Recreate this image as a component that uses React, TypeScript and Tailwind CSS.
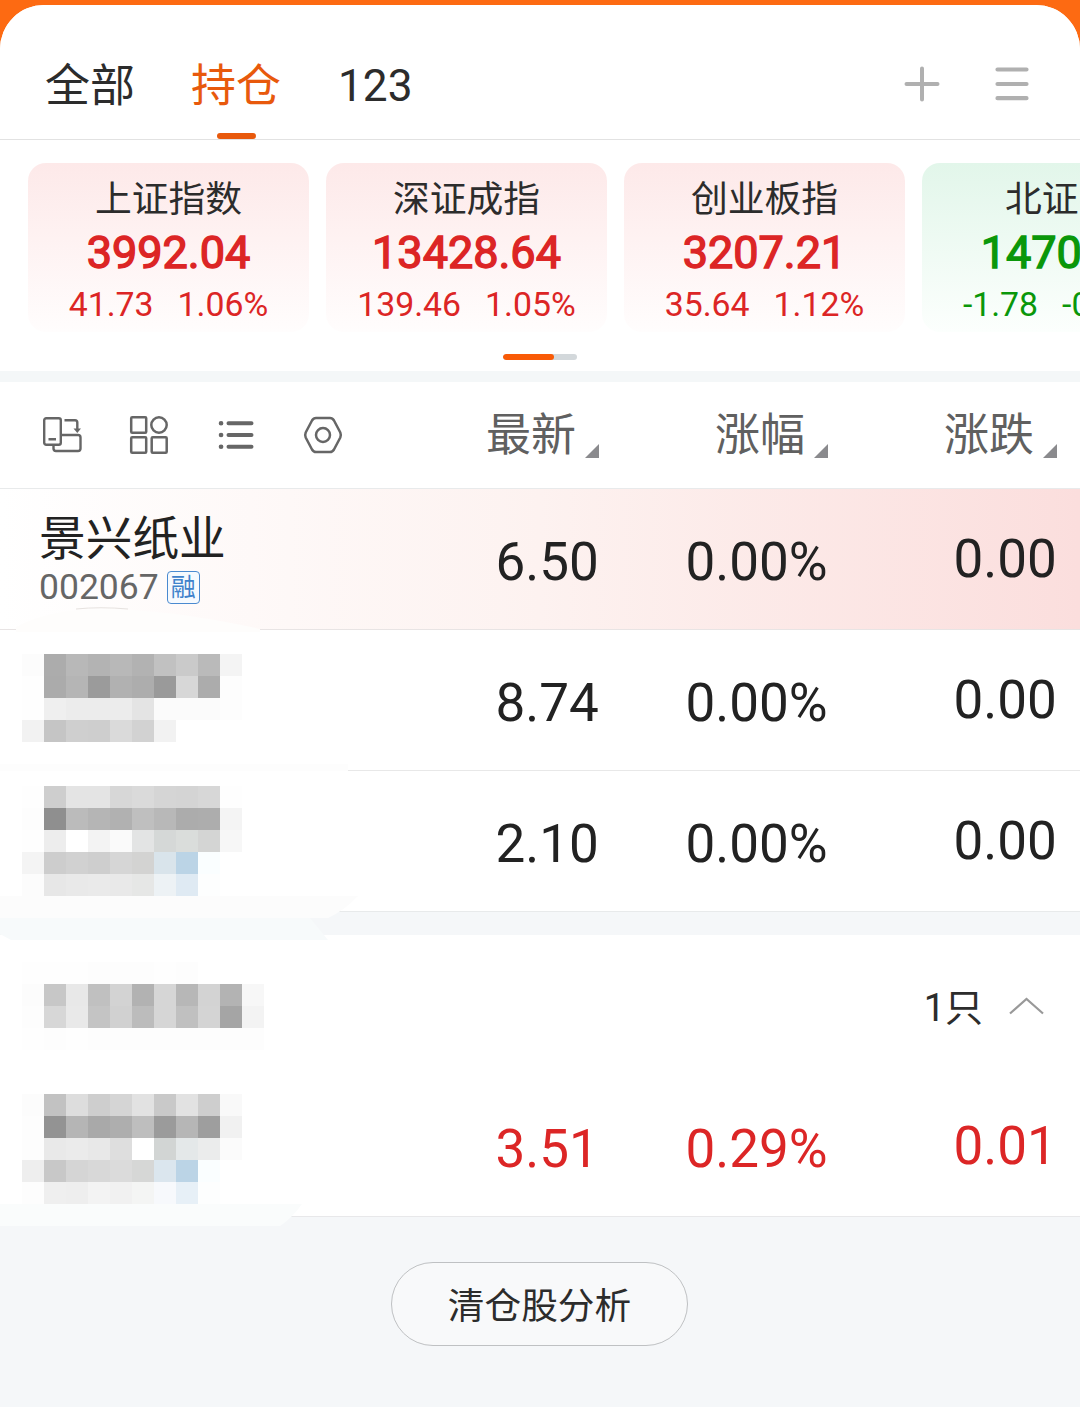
import React from 'react';

const INDEXES = [
  { name: '上证指数', price: '3992.04', change: '41.73', percent: '1.06%', up: true },
  { name: '深证成指', price: '13428.64', change: '139.46', percent: '1.05%', up: true },
  { name: '创业板指', price: '3207.21', change: '35.64', percent: '1.12%', up: true },
  { name: '北证50', price: '1470.35', change: '-1.78', percent: '-0.12%', up: false },
];

const COLUMNS = ['最新', '涨幅', '涨跌'];

// Masked names, one colour per 22px tile
const MASK_A = [
  ['#fcfcfc', '#acacac', '#b8b8b8', '#b3b3b3', '#b8b8b8', '#b2b2b2', '#c1c1c1', '#cacaca', '#bababa', '#f4f4f4'],
  ['#fefefe', '#ababab', '#b5b5b5', '#9b9b9b', '#b1b1b1', '#adadad', '#9a9a9a', '#d7d7d7', '#acacac', '#fdfdfd'],
  ['#fefefe', '#efefef', '#ececec', '#ececec', '#ececec', '#e4e4e4', '#fbfbfb', '#fbfbfb', '#fbfbfb', '#fdfdfd'],
  ['#f2f2f2', '#c5c5c5', '#cfcfcf', '#cecece', '#dadada', '#d2d2d2', '#f2f2f2'],
];

const MASK_B = [
  ['#fefefe', '#cecece', '#e4e4e4', '#e4e4e4', '#d7d7d7', '#dadada', '#d5d5d5', '#d4d4d4', '#d7d7d7', '#fefefe'],
  ['#fdfdfd', '#8f8f8f', '#bbbbbb', '#b5b5b5', '#b1b1b1', '#bfbfbf', '#b8b8b8', '#acacac', '#adadad', '#f4f4f4'],
  ['#fefefe', '#ededed', '#ffffff', '#f3f3f3', '#fafafa', '#e3e4e4', '#d5d8d7', '#dadddb', '#d4d5d4', '#f7f7f7'],
  ['#f4f4f4', '#cdcdcd', '#d1d1d1', '#cecece', '#d6d6d6', '#d3d3d2', '#d9e4eb', '#bbd4e6', '#fafeff'],
  ['#fcfcfc', '#e7e7e7', '#e9e9e9', '#eaeaea', '#e9e9e9', '#e6e7e6', '#edf2f5', '#dfeaf3', '#fdfefe'],
];

const MASK_TITLE = [
  ['#fefefe', '#fefefe', '#fefefe', '#fdfdfd', '#fdfdfd', '#fdfdfd', '#fefefe', '#fdfdfd'],
  ['#fcfcfc', '#c7c7c7', '#e8e8e8', '#c0c0c0', '#d3d3d3', '#b2b2b2', '#d6d6d6', '#b7b7b7', '#d3d3d3', '#b3b3b3', '#f7f7f7'],
  ['#fdfdfd', '#d7d7d7', '#e9e9e9', '#c4c4c4', '#d1d1d1', '#bcbcbc', '#d6d6d6', '#c0c0c0', '#d4d4d4', '#a5a5a5', '#f3f3f3'],
  ['#fefefe', '#fdfdfd', '#fefefe', '#fdfdfd', '#fdfdfd', '#fdfdfd', '#fdfdfd', '#fdfdfd', '#fdfdfd', '#fdfdfd', '#fdfdfd'],
];

const MASK_C = [
  ['#fcfcfc', '#c2c2c2', '#dddddd', '#cecece', '#d5d5d5', '#e2e2e2', '#c9c9c9', '#e2e2e2', '#cecece', '#f9f9f9'],
  ['#fdfdfd', '#939393', '#b5b5b5', '#a9a9a9', '#aeaeae', '#bebebe', '#9b9b9b', '#b6b6b6', '#9e9e9e', '#f1f1f1'],
  ['#fdfdfd', '#e9e9e9', '#ebebeb', '#e8e8e8', '#dedede', '#ffffff', '#d2d5d4', '#e4e8e9', '#ebecec', '#fbfbfb'],
  ['#eeeeee', '#c8c8c8', '#d5d5d5', '#d8d8d8', '#dbdbdb', '#d6d7d6', '#dbe6ee', '#bbd4e6', '#fafeff'],
  ['#fdfdfd', '#efefef', '#eeeeee', '#f3f3f3', '#f1f1f1', '#f4f5f4', '#f7f9fc', '#e7f0f7', '#fdfefe'],
];

const Mosaic = ({ tiles }: { tiles: string[][] }) => (
  <div className="w-[320px] shrink-0 pl-[22px]">
    {tiles.map((row, y) => (
      <div key={y} className="flex h-[22px]">
        {row.map((color, x) => (
          <div key={x} className="size-[22px]" style={{ backgroundColor: color }} />
        ))}
      </div>
    ))}
  </div>
);

const IndexCard = ({ item }: { item: (typeof INDEXES)[number] }) => (
  <div
    className={`h-[169px] w-[281px] shrink-0 rounded-[18px] bg-gradient-to-b pt-[15px] text-center whitespace-nowrap ${
      item.up ? 'from-[#fde9e9] to-[#fffdfd] text-[#dc2525]' : 'from-[#e2f6ea] to-[#fcfffd] text-[#0a970a]'
    }`}
  >
    <div className="text-[36.8px] leading-[44px] text-[#2c2c2c]">{item.name}</div>
    <div className="text-[45px] leading-[62px] [-webkit-text-stroke:1.4px_currentColor]">{item.price}</div>
    <div className="flex justify-center gap-[24px] text-[33.8px] leading-[41px]">
      <span>{item.change}</span>
      <span>{item.percent}</span>
    </div>
  </div>
);

const Values = ({ values, red }: { values: string[]; red?: boolean }) => (
  <div className={`ml-auto flex text-[53px] leading-[140px] ${red ? 'text-[#dc2626]' : 'text-[#222222]'}`}>
    <div className="w-[190px] pt-[3px]">{values[0]}</div>
    <div className="w-[268px] pt-[3px]">{values[1]}</div>
    <div className="w-[126.5px]">{values[2]}</div>
  </div>
);

const App = () => {
  return (
    <div className="h-[1407px] w-[1080px] overflow-hidden bg-[#fd6a12] pt-[5px] font-[Roboto,'Noto_Sans_CJK_SC',sans-serif]">
      <div className="h-[1402px] overflow-hidden rounded-t-[44px] bg-[#f5f7f9]">
        {/* Tabs */}
        <header className="flex h-[135px] items-center border-b border-[#e2e2e2] bg-white pt-[26px] pr-[51px] pl-[45px] text-[45px] text-[#2c2c2c]">
          <span className="pt-[4px] leading-[60px]">全部</span>
          <span className="relative ml-[56px] pt-[4px] leading-[60px] text-[#e8590c]">
            持仓
            <i className="absolute top-[80px] left-[26px] h-[6px] w-[39px] rounded-full bg-[#e8590c]" />
          </span>
          <span className="ml-[57px] pt-[2px] text-[44.2px] leading-[60px]">123</span>
          <svg className="mt-[-3px] ml-auto" width="36" height="36" viewBox="0 0 36 36" stroke="#b0b0b0" strokeWidth="4" strokeLinecap="round">
            <path d="M18 2.500V33.500M2.500 18H33.500" />
          </svg>
          <svg className="mt-[-3px] ml-[55px]" width="34" height="36" viewBox="0 0 34 36" stroke="#b0b0b0" strokeWidth="4.200" strokeLinecap="round">
            <path d="M2.500 3.500H31.500M2.500 18H31.500M2.500 32.200H31.500" />
          </svg>
        </header>

        {/* Index cards */}
        <section className="h-[231px] bg-white pt-[23px]">
          <div className="flex gap-[17px] overflow-hidden pl-[28px]">
            {INDEXES.map((item) => (
              <IndexCard key={item.name} item={item} />
            ))}
          </div>
          <div className="mx-auto mt-[22px] h-[6px] w-[74px] overflow-hidden rounded-full bg-[#d3d8db]">
            <div className="h-full w-[51px] rounded-full bg-[#f95a06]" />
          </div>
        </section>
        <div className="h-[11px] bg-[#f4f7f8]" />

        {/* Table header */}
        <div className="flex h-[107px] items-center border-b border-[#e8eaeb] bg-white pl-[42px]">
          <div className="flex gap-[46px]">
            <svg width="41" height="40" viewBox="0 0 41 40" fill="none" stroke="#666" strokeWidth="2.400" strokeLinejoin="round">
              <rect x="2.200" y="3.200" width="16.600" height="26.600" rx="2" />
              <path d="M6.500 24.300H14M11.500 30V33.500Q11.500 36 14 36H36Q38.500 36 38.500 33.500V22.500Q38.500 20 36 20H19M22.500 5.200H33Q35.300 5.200 35.300 7.500V15" />
              <path d="M31.500 13.500H39L35.300 18Z" fill="#666" stroke="none" />
            </svg>
            <svg width="41" height="40" viewBox="0 0 41 40" fill="none" stroke="#666" strokeWidth="2.500">
              <rect x="2.200" y="2.200" width="15" height="15.500" rx="1" />
              <circle cx="30" cy="10" r="7.700" />
              <rect x="2.200" y="22.300" width="15" height="15.500" rx="1" />
              <rect x="22.700" y="22.300" width="15" height="15.500" rx="1" />
            </svg>
            <svg width="41" height="40" viewBox="0 0 41 40" fill="none" stroke="#666" strokeWidth="4" strokeLinecap="round">
              <path d="M12.500 8.300H35.500M12.500 20H35.500M12.500 31.700H35.500" />
              <path d="M5 8.300H5.100M5 20H5.100M5 31.700H5.100" strokeWidth="4.600" />
            </svg>
            <svg width="41" height="40" viewBox="0 0 41 40" fill="none" stroke="#666" strokeWidth="2.500">
              <path d="M13 3H27Q29.500 3 31 5.500L37.300 17.500Q38.300 20 37.300 22.500L31 34.500Q29.500 37 27 37H13Q10.500 37 9 34.500L2.700 22.500Q1.700 20 2.700 17.500L9 5.500Q10.500 3 13 3Z" />
              <circle cx="20" cy="20" r="7" />
            </svg>
          </div>
          <div className="ml-auto flex text-[45px] leading-[60px] text-[#606060]">
            {COLUMNS.map((name) => (
              <div key={name} className="flex w-[229px] items-end pt-[2px] last:w-[136px]">
                <span>{name}</span>
                <svg className="mb-[8px] ml-[9px]" width="14" height="14" viewBox="0 0 14 14">
                  <path d="M14 0V14H0Z" fill="#8a8a8d" />
                </svg>
              </div>
            ))}
          </div>
        </div>

        {/* Holdings */}
        <div className="relative flex h-[141px] border-b border-[#e8e4e4] bg-gradient-to-r from-white via-[#fdf2f0] to-[#fbdedd]">
          <div className="pt-[21px] pl-[39px]">
            <div className="text-[46.700px] leading-[58px] text-[#222222]">景兴纸业</div>
            <div className="flex h-[38px] items-center text-[35.500px] leading-[38px] text-[#666666]">
              002067
              <span className="ml-[8px] flex h-[33px] w-[33px] items-center justify-center rounded-[4px] border border-[#4a8ad0] bg-[#f6fafe] pt-[1px] text-[25px] leading-none text-[#3f82cb]">
                融
              </span>
            </div>
          </div>
          <Values values={['6.50', '0.00%', '0.00']} />
          <svg className="absolute top-[118px] left-0 z-10" width="270" height="26" viewBox="0 0 270 26">
            <path d="M16 25V20Q50 2 100 2Q170 2 260 22V25Z" fill="#fefdfc" />
            <path d="M76 2Q100 -0.500 128 2" stroke="#e6e2df" fill="none" />
          </svg>
        </div>
        <div className="relative flex h-[141px] border-b border-[#e8e8e8] bg-white">
          <div className="pt-[24px]">
            <Mosaic tiles={MASK_A} />
          </div>
          <Values values={['8.74', '0.00%', '0.00']} />
          <svg className="absolute top-[134px] left-0" width="355" height="22" viewBox="0 0 355 22">
            <path d="M0 0H348V14L355 22H0Z" fill="#fdfdfd" />
          </svg>
        </div>
        <div className="relative flex h-[141px] border-b border-[#e8eaeb] bg-white">
          <div className="pt-[15px]">
            <Mosaic tiles={MASK_B} />
          </div>
          <Values values={['2.10', '0.00%', '0.00']} />
          <svg className="absolute top-[125px] left-0 z-10" width="360" height="44" viewBox="0 0 360 44">
            <path d="M0 0H358Q345 14 328 22H0Z" fill="#fcfcfc" />
            <path d="M0 22H310L328 44H11L0 38Z" fill="#f7fafb" />
          </svg>
        </div>
        <div className="h-[23px] bg-[#f5f7f9]" />

        {/* Collapsible group */}
        <div className="flex h-[141px] bg-white">
          <div className="pt-[27px]">
            <Mosaic tiles={MASK_TITLE} />
          </div>
          <div className="ml-auto flex items-center pr-[36px] text-[38px] text-[#2c2c2c]">
            <span className="pt-[6px]">1只</span>
            <svg className="ml-[26px]" width="35" height="18" viewBox="0 0 35 18" fill="none" stroke="#999" strokeWidth="2.200">
              <path d="M1 16.500L17.500 2L34 16.500" />
            </svg>
          </div>
        </div>
        <div className="relative flex h-[141px] border-b border-[#e8e8ea] bg-white">
          <div className="pt-[18px]">
            <Mosaic tiles={MASK_C} />
          </div>
          <Values values={['3.51', '0.29%', '0.01']} red />
          <svg className="absolute top-[128px] left-0 z-10" width="302" height="22" viewBox="0 0 302 22">
            <path d="M0 0H302Q292 14 280 22H0Z" fill="#fafcfc" />
          </svg>
        </div>

        {/* Footer action */}
        <div className="flex justify-center pt-[45px] pr-[1px]">
          <button className="h-[84px] w-[297px] rounded-full border border-[#bfc1c3] bg-[#f8f9fa] pt-[6px] text-[36.700px] text-[#2c2c2c]">
            清仓股分析
          </button>
        </div>
      </div>
    </div>
  );
};

export default App;
